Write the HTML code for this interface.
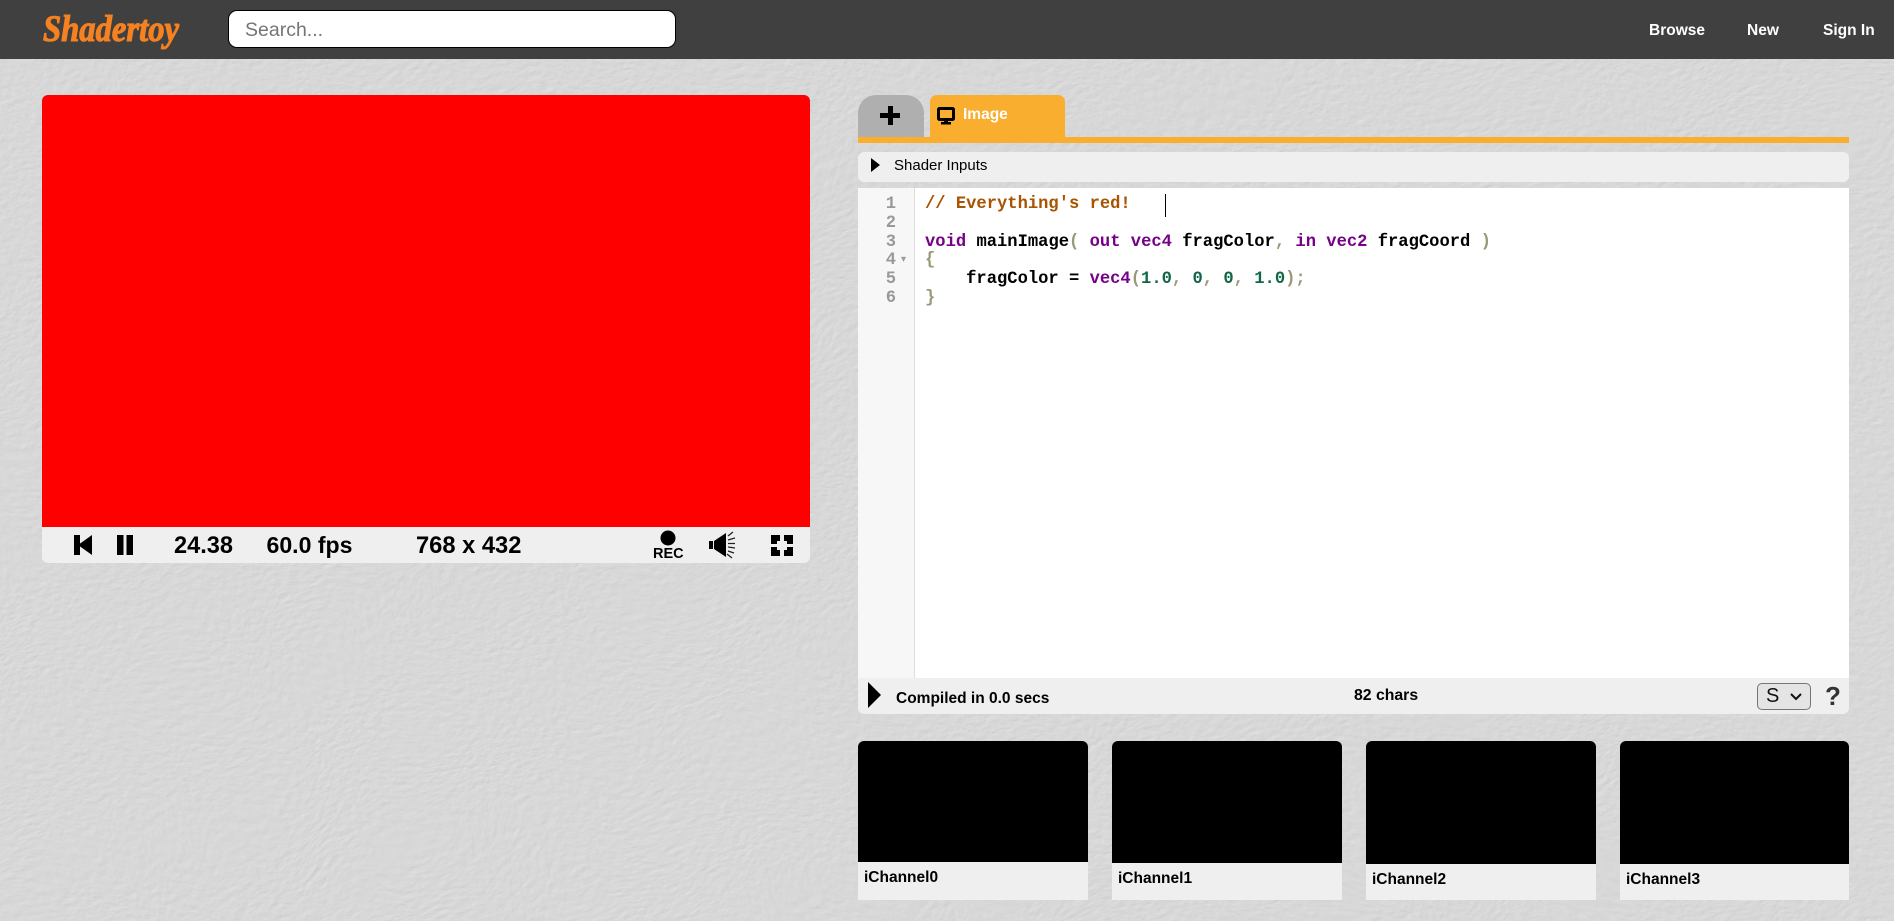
<!DOCTYPE html>
<html lang="en"><head><meta charset="utf-8"><title>Shadertoy</title>
<style>
html,body{margin:0;padding:0;width:1894px;height:921px;overflow:hidden;background:#d8d8d8}
body{position:relative;font-family:"Liberation Sans",sans-serif;color:#000}
.a{position:absolute}
.t{position:absolute;white-space:pre;line-height:20px}
.b{font-weight:bold}
#bg{left:0;top:0;width:1894px;height:921px;overflow:hidden;contain:paint}
#hdr{left:0;top:0;width:1894px;height:59px;background:#404040}
#search{left:228px;top:10px;width:446px;height:36px;background:#fff;border:1px solid #000;border-radius:9px}
.nav{color:#fff;font-weight:bold;font-size:15.5px;top:21px}
.code{position:absolute;left:925px;font:bold 17.15px/20px "Liberation Mono",monospace;white-space:pre;color:#000}
.ln{position:absolute;width:30px;left:866px;text-align:right;font:bold 17.15px/20px "Liberation Mono",monospace;color:#999}
.c{color:#a85400}.k{color:#708}.n{color:#164}.p{color:#997}
.ch{position:absolute;top:741px;height:159px;background:#efefef;border-radius:6px 6px 0 0;overflow:hidden}
.ch i{display:block;background:#000}
.ch b{position:absolute;left:6px;font-size:15.5px;line-height:20px}
</style></head><body>
<div class="a" id="bg">
<svg style="display:block;overflow:hidden" width="1894" height="921" xmlns="http://www.w3.org/2000/svg">
<filter id="fur" filterUnits="userSpaceOnUse" x="-100" y="-100" width="2094" height="1121" color-interpolation-filters="sRGB">
<feTurbulence type="fractalNoise" baseFrequency="0.11 0.17" numOctaves="2" seed="4" result="fine"/>
<feTurbulence type="fractalNoise" baseFrequency="0.006" numOctaves="2" seed="9" result="warp"/>
<feDisplacementMap in="fine" in2="warp" scale="70" xChannelSelector="R" yChannelSelector="G" result="swirl"/>
<feColorMatrix in="swirl" type="matrix" values="0 0 0 0 0 0 0 0 0 0 0 0 0 0 0 .5 .5 0 0 0" result="h"/>
<feDiffuseLighting in="h" surfaceScale="0.25" diffuseConstant="1.13" lighting-color="#d8d8d8"><feDistantLight azimuth="225" elevation="62"/></feDiffuseLighting>
</filter>
<rect x="0" y="0" width="1894" height="921" filter="url(#fur)"/>
</svg>
</div>

<div class="a" id="hdr"></div>
<svg class="a" style="left:38px;top:6px" width="150" height="50" xmlns="http://www.w3.org/2000/svg"><text x="5" y="35" font-family="Liberation Serif" font-weight="bold" font-style="italic" font-size="37" fill="#f58120" stroke="#f58120" stroke-width="1.1" textLength="136" lengthAdjust="spacingAndGlyphs">Shadertoy</text></svg>
<div class="a" id="search"></div>
<div class="t" style="left:245px;top:20px;font-size:19.5px;color:#757575">Search...</div>
<div class="t nav" style="left:1649px">Browse</div>
<div class="t nav" style="left:1747px">New</div>
<div class="t nav" style="left:1823px">Sign In</div>

<!-- player -->
<div class="a" style="left:42px;top:95px;width:768px;height:432px;background:#f00;border-radius:6px 6px 0 0"></div>
<div class="a" style="left:42px;top:527px;width:768px;height:36px;background:#efefef;border-radius:0 0 6px 6px"></div>
<svg class="a" style="left:42px;top:527px" width="768" height="36" xmlns="http://www.w3.org/2000/svg">
<path d="M32 8h6v20h-6zM50 8v20L36 18z" fill="#000"/>
<path d="M75 8h6.500v20h-6.500zM84.500 8h6.500v20h-6.500z" fill="#000"/>
<circle cx="626" cy="11" r="7.500" fill="#000"/>
<path d="M667 14h4v8h-4zM672 14l12-8v24l-12-8z" fill="#000"/>
<path d="M686 9l5-4M686 13l7-2M686 16.500h7M686 20l7 1M686 24l6 2M685 27l5 4" stroke="#222" stroke-width="1.300" fill="none"/>
<path d="M729 8h9v6h-3v3h-6zM742 8h9v9h-6v-3h-3zM729 20h6v3h3v6h-9zM745 20h6v9h-9v-6h3z" fill="#000"/>
</svg>
<div class="t b" style="left:174px;top:536px;font-size:23.6px;line-height:20px">24.38</div>
<div class="t b" style="left:266.500px;top:535px;font-size:23.1px;line-height:20px">60.0 fps</div>
<div class="t b" style="left:416px;top:536px;font-size:23.7px;line-height:20px">768 x 432</div>
<div class="t b" style="left:653px;top:544px;font-size:14.500px;line-height:20px">REC</div>

<!-- tabs -->
<div class="a" style="left:858px;top:95px;width:66px;height:42px;background:#afafaf;border-radius:18px 18px 0 0"></div>
<div class="a" style="left:880px;top:113px;width:20px;height:5px;background:#000"></div>
<div class="a" style="left:887.500px;top:106px;width:5px;height:19px;background:#000"></div>
<div class="a" style="left:930px;top:95px;width:135px;height:42px;background:#f9ae2f;border-radius:7px 7px 0 0"></div>
<svg class="a" style="left:936px;top:105px" width="20" height="20" xmlns="http://www.w3.org/2000/svg"><rect x="2.500" y="3.500" width="15" height="11" rx="1" fill="none" stroke="#000" stroke-width="3"/><rect x="8" y="15" width="4" height="2" fill="#000"/><rect x="5" y="17" width="10" height="2.500" fill="#000"/></svg>
<div class="t b" style="left:963px;top:105px;font-size:15.500px;color:#fff">Image</div>
<div class="a" style="left:858px;top:137px;width:991px;height:6px;background:#f9ae2f"></div>

<div class="a" style="left:858px;top:152px;width:991px;height:30px;background:#efefef;border-radius:6px"></div>
<svg class="a" style="left:870px;top:157px" width="12" height="16" xmlns="http://www.w3.org/2000/svg"><path d="M1 1l9 7-9 7z" fill="#000"/></svg>
<div class="t" style="left:894px;top:156px;font-size:15px">Shader Inputs</div>

<!-- editor -->
<div class="a" style="left:858px;top:188px;width:991px;height:490px;background:#fff"></div>
<div class="a" style="left:858px;top:188px;width:56px;height:490px;background:#f7f7f7;border-right:1px solid #ddd"></div>
<div class="ln" style="top:195px">1</div>
<div class="ln" style="top:214px">2</div>
<div class="ln" style="top:233px">3</div>
<div class="ln" style="top:251px">4</div>
<div class="ln" style="top:270px">5</div>
<div class="ln" style="top:289px">6</div>
<div class="t" style="left:901px;top:250px;font-size:10px;color:#999">▾</div>
<div class="code" style="top:195px"><span class="c">// Everything's red!</span></div>
<div class="code" style="top:233px"><span class="k">void</span> mainImage<span class="p">(</span> <span class="k">out</span> <span class="k">vec4</span> fragColor<span class="p">,</span> <span class="k">in</span> <span class="k">vec2</span> fragCoord <span class="p">)</span></div>
<div class="code" style="top:251px"><span class="p">{</span></div>
<div class="code" style="top:270px">    fragColor = <span class="k">vec4</span><span class="p">(</span><span class="n">1.0</span><span class="p">,</span> <span class="n">0</span><span class="p">,</span> <span class="n">0</span><span class="p">,</span> <span class="n">1.0</span><span class="p">);</span></div>
<div class="code" style="top:289px"><span class="p">}</span></div>
<div class="a" style="left:1165px;top:194px;width:1px;height:23px;background:#000"></div>

<!-- status -->
<div class="a" style="left:858px;top:678px;width:991px;height:36px;background:#efefef;border-radius:0 0 6px 6px"></div>
<svg class="a" style="left:867px;top:681px" width="16" height="28" xmlns="http://www.w3.org/2000/svg"><path d="M1 1l13 13L1 27z" fill="#000"/></svg>
<div class="t b" style="left:896px;top:689px;font-size:15.500px">Compiled in 0.0 secs</div>
<div class="t b" style="left:1354px;top:686px;font-size:15.800px">82 chars</div>
<div class="a" style="left:1757px;top:683px;width:52px;height:25px;background:#e4e4e4;border:1px solid #767676;border-radius:5px"></div>
<div class="t" style="left:1766px;top:686px;font-size:20px;color:#111">S</div>
<svg class="a" style="left:1789px;top:692px" width="14" height="10" xmlns="http://www.w3.org/2000/svg"><path d="M2 2l5 5 5-5" fill="none" stroke="#111" stroke-width="2"/></svg>
<div class="t b" style="left:1825px;top:686px;font-size:26px;color:#333">?</div>

<!-- channels -->
<div class="ch" style="left:858px;width:230px"><i style="height:121px"></i><b style="top:127px">iChannel0</b></div>
<div class="ch" style="left:1112px;width:230px"><i style="height:122px"></i><b style="top:128px">iChannel1</b></div>
<div class="ch" style="left:1366px;width:230px"><i style="height:123px"></i><b style="top:129px">iChannel2</b></div>
<div class="ch" style="left:1620px;width:229px"><i style="height:123px"></i><b style="top:129px">iChannel3</b></div>
</body></html>
